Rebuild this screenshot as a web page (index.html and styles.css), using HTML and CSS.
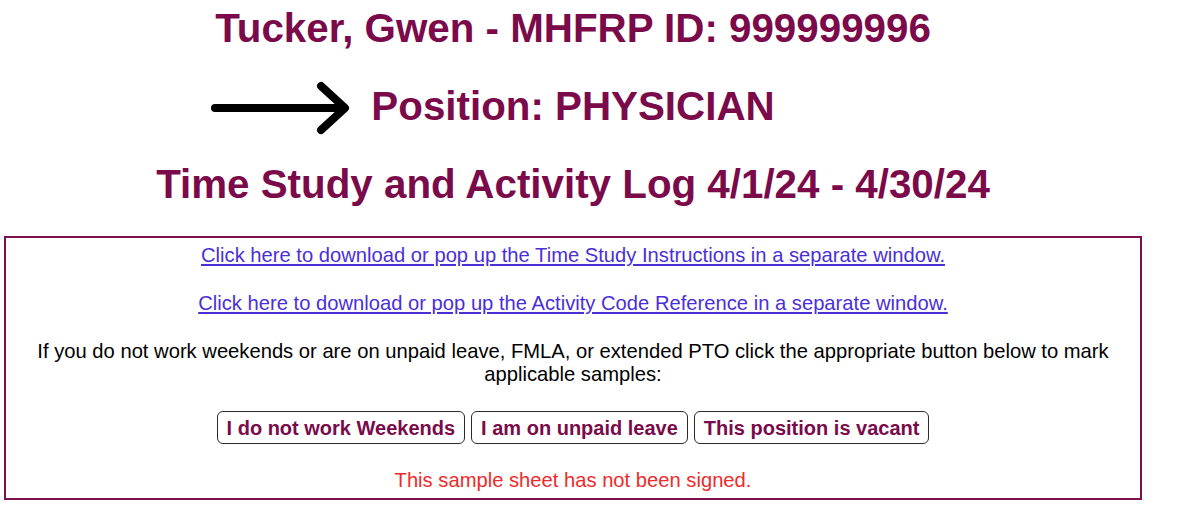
FILE: index.html
```html
<!DOCTYPE html>
<html lang="en">
<head>
<meta charset="utf-8">
<title>Time Study and Activity Log</title>
<link rel="stylesheet" href="styles.css">
</head>
<body>
<div class="page">
  <h2 class="title">Tucker, Gwen - MHFRP ID: 999999996</h2>
  <h2 class="title"><span class="position">
    <svg class="arrow" width="140" height="54" viewBox="0 0 140 54" aria-hidden="true">
      <path d="M5 27 H134 M111 5 L135 27 L111 49" fill="none" stroke="#000" stroke-width="8" stroke-linecap="round" stroke-linejoin="round"/>
    </svg>Position: PHYSICIAN</span></h2>
  <h2 class="title">Time Study and Activity Log 4/1/24 - 4/30/24</h2>

  <div class="panel">
    <p class="line"><a href="#" class="link">Click here to download or pop up the Time Study Instructions in a separate window.</a></p>
    <p class="line"><a href="#" class="link">Click here to download or pop up the Activity Code Reference in a separate window.</a></p>
    <p class="line">If you do not work weekends or are on unpaid leave, FMLA, or extended PTO click the appropriate button below to mark applicable samples:</p>
    <div class="buttons">
      <button class="btn" type="button">I do not work Weekends</button>
      <button class="btn" type="button">I am on unpaid leave</button>
      <button class="btn" type="button">This position is vacant</button>
    </div>
    <p class="line warn">This sample sheet has not been signed.</p>
  </div>
</div>
</body>
</html>
```

FILE: styles.css
```css
html, body {
  margin: 0;
  padding: 0;
  background: #ffffff;
}

body {
  font-family: "Liberation Sans", Arial, sans-serif;
  color: #000;
}

.page {
  width: 1138px;
  margin-left: 4px;
  padding-top: 5px;
  display: flex;
  flex-direction: column;
  gap: 32px;
}

.title {
  margin: 0;
  font-size: 40.35px;
  line-height: 46px;
  font-weight: bold;
  color: #7b0a4b;
  text-align: center;
}

.position {
  position: relative;
  display: inline-block;
}

.arrow {
  position: absolute;
  right: calc(100% + 21px);
  top: -2px;
}

.panel {
  margin-top: -3px;
  border: 2px solid #7b1250;
  padding: 6px 10px 6px;
  display: flex;
  flex-direction: column;
  gap: 25px;
  text-align: center;
}

.line {
  margin: 0;
  font-size: 20.2px;
  line-height: 23px;
}

.link {
  color: #4a2fd8;
  text-decoration: underline;
}

.buttons {
  display: flex;
  justify-content: center;
  gap: 6px;
}

.btn {
  box-sizing: border-box;
  height: 33px;
  font-family: "Liberation Sans", Arial, sans-serif;
  font-size: 20px;
  font-weight: bold;
  line-height: 24px;
  color: #7b0a4b;
  background: #fff;
  border: 1.5px solid #2a2a2a;
  border-radius: 6px;
  padding: 0 9px;
  margin: 0;
}

.warn {
  color: #f02a2a;
}
```
